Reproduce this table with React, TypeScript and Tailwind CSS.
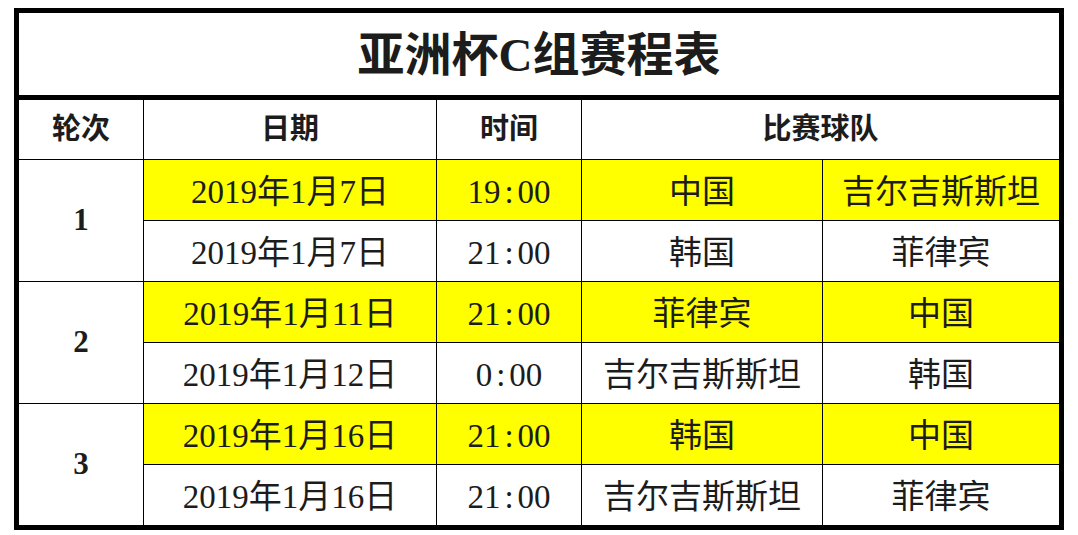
import React from 'react';

// 亚洲杯C组赛程表 — schedule rows
type Match = { date: string; time: string; home: string; away: string; highlight: boolean };

const rounds: { round: string; matches: Match[] }[] = [
  {
    round: '1',
    matches: [
      { date: '2019年1月7日', time: '19:00', home: '中国', away: '吉尔吉斯斯坦', highlight: true },
      { date: '2019年1月7日', time: '21:00', home: '韩国', away: '菲律宾', highlight: false },
    ],
  },
  {
    round: '2',
    matches: [
      { date: '2019年1月11日', time: '21:00', home: '菲律宾', away: '中国', highlight: true },
      { date: '2019年1月12日', time: '0:00', home: '吉尔吉斯斯坦', away: '韩国', highlight: false },
    ],
  },
  {
    round: '3',
    matches: [
      { date: '2019年1月16日', time: '21:00', home: '韩国', away: '中国', highlight: true },
      { date: '2019年1月16日', time: '21:00', home: '吉尔吉斯斯坦', away: '菲律宾', highlight: false },
    ],
  },
];

const font = "font-['Liberation_Serif','Noto_Sans_CJK_SC',serif]";

const Time: React.FC<{ value: string }> = ({ value }) => {
  const [h, m] = value.split(':');
  return (
    <span>
      {h}
      <span className="inline-block px-[4px]">:</span>
      {m}
    </span>
  );
};

export default function App() {
  return (
    <div className={`min-h-screen bg-white pt-[8px] pl-[14px] text-[#1c1c1c] ${font}`}>
      <div className="w-[1050px] border-[5px] border-black">
        <div className="flex h-[87px] items-center justify-center border-b-[5px] border-black pt-[3px]">
          <h1 className="text-[47px] font-bold leading-none">亚洲杯C组赛程表</h1>
        </div>
        <div className="grid grid-cols-[124px_292px_144px_240px_236px] grid-rows-[59px_repeat(6,60px)] gap-px bg-black">
          <div className="flex items-center justify-center bg-white text-[29px] font-bold">轮次</div>
          <div className="flex items-center justify-center bg-white text-[29px] font-bold">日期</div>
          <div className="flex items-center justify-center bg-white text-[29px] font-bold">时间</div>
          <div className="col-span-2 flex items-center justify-center bg-white text-[29px] font-bold">比赛球队</div>

          {rounds.map((r) => (
            <React.Fragment key={r.round}>
              <div className="row-span-2 flex items-center justify-center bg-white text-[31px] font-bold">
                {r.round}
              </div>
              {r.matches.map((m, i) => {
                const bg = m.highlight ? 'bg-[#ffff00]' : 'bg-white';
                return (
                  <React.Fragment key={i}>
                    <div className={`flex items-center justify-center pt-[5px] text-[33px] ${bg}`}>{m.date}</div>
                    <div className={`flex items-center justify-center pt-[5px] text-[33px] ${bg}`}>
                      <Time value={m.time} />
                    </div>
                    <div className={`flex items-center justify-center pt-[5px] text-[33px] ${bg}`}>{m.home}</div>
                    <div className={`flex items-center justify-center pt-[5px] text-[33px] ${bg}`}>{m.away}</div>
                  </React.Fragment>
                );
              })}
            </React.Fragment>
          ))}
        </div>
      </div>
    </div>
  );
}
